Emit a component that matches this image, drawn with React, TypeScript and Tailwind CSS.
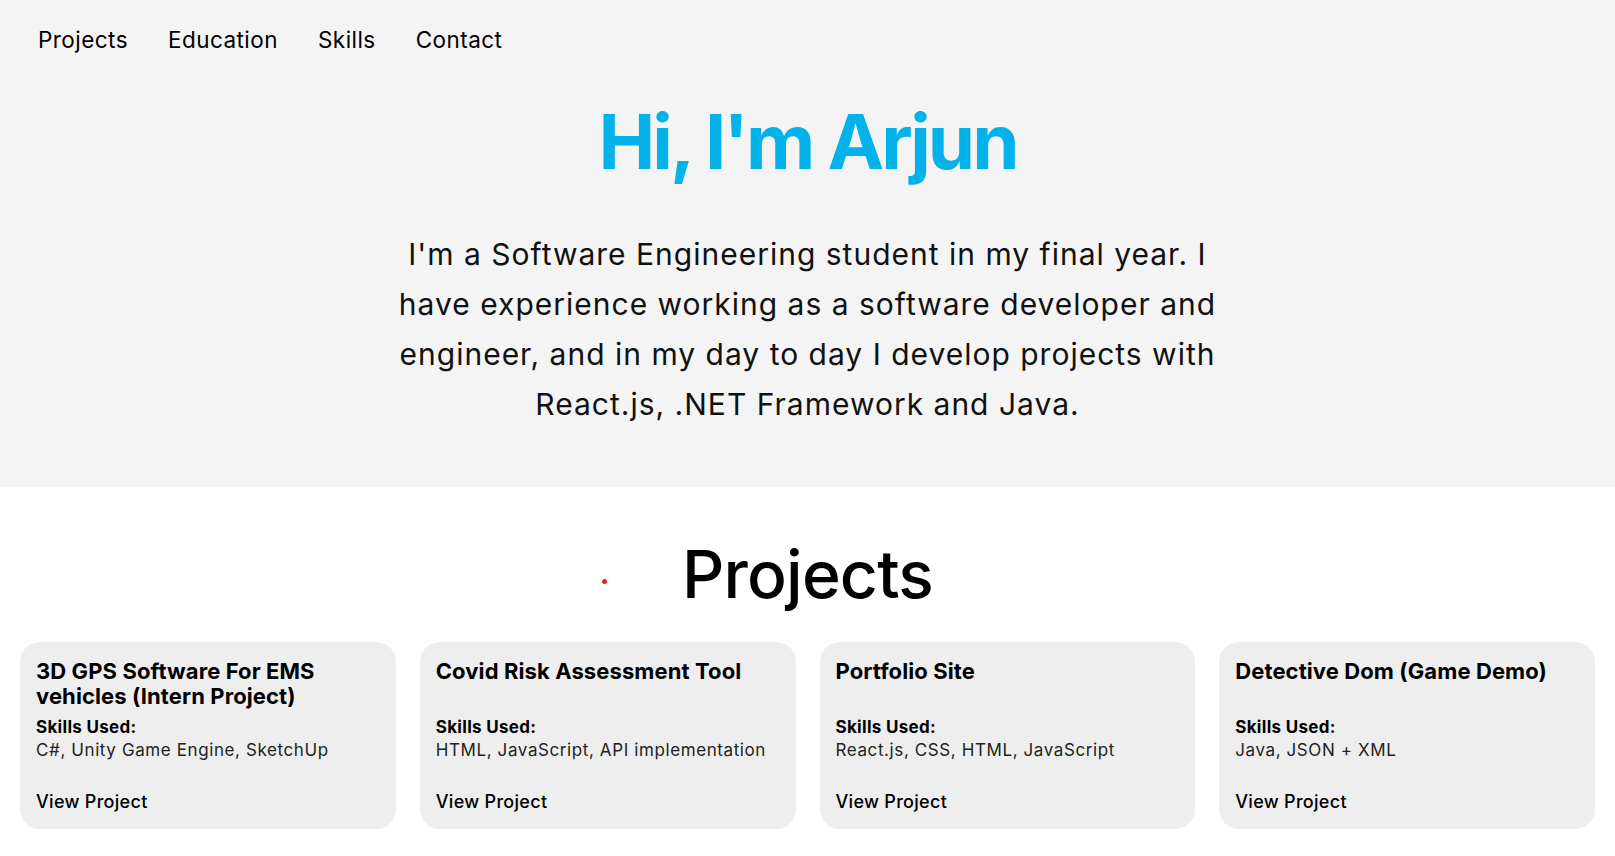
import React from 'react';

type Project = {
  title: string;
  skills: string;
};

const projects: Project[] = [
  { title: '3D GPS Software For EMS vehicles (Intern Project)', skills: 'C#, Unity Game Engine, SketchUp' },
  { title: 'Covid Risk Assessment Tool', skills: 'HTML, JavaScript, API implementation' },
  { title: 'Portfolio Site', skills: 'React.js, CSS, HTML, JavaScript' },
  { title: 'Detective Dom (Game Demo)', skills: 'Java, JSON + XML' },
];

function Nav() {
  return (
    <nav className="flex items-center gap-10 px-[38px] pt-[23px] text-[22.5px] tracking-[0.45px] text-black">
      <a href="#projects">Projects</a>
      <a href="#education">Education</a>
      <a href="#skills">Skills</a>
      <a href="#contact">Contact</a>
    </nav>
  );
}

function ProjectCard({ title, skills }: Project) {
  return (
    <div className="flex flex-col rounded-[20px] bg-[#eeeeee] px-4 pt-[17px] pb-[16px] text-black">
      <h3 className="min-h-[50px] text-[22px] font-bold leading-[25px] tracking-[0.1px]">{title}</h3>
      <p className="mt-[7px] text-[17px] font-bold leading-[22px] tracking-[0.3px]">Skills Used:</p>
      <p className="mt-[1px] text-[17px] leading-[23px] tracking-[0.6px] text-[#222]">{skills}</p>
      <a href="#" className="mt-[29px] text-[18px] font-medium leading-[22px] tracking-[0.3px]">
        View Project
      </a>
    </div>
  );
}

export default function App() {
  return (
    <div className="min-h-screen bg-white font-['Inter',sans-serif]">
      <header className="h-[487px] bg-[#f4f4f4]">
        <Nav />
        <div className="flex flex-col items-center">
          <h1 className="mt-[39px] text-[76px] font-bold leading-[90px] tracking-[-3px] text-[#03b2e8]">
            Hi, I'm Arjun
          </h1>
          <p className="mt-[43px] max-w-[840px] text-center text-[30px] leading-[50px] tracking-[1px] text-[#111]">
            I'm a Software Engineering student in my final year. I have experience working as a software developer and
            engineer, and in my day to day I develop projects with React.js, .NET Framework and Java.
          </p>
        </div>
      </header>

      <section id="projects" className="px-5">
        <div className="relative flex justify-center pt-[52px]">
          <span className="absolute left-[582px] top-[92px] h-[5px] w-[5px] rounded-full bg-[#e8242a]" />
          <h2 className="text-[66px] font-medium leading-[70px] tracking-[-0.8px] text-black">Projects</h2>
        </div>
        <div className="mt-[33px] grid grid-cols-4 gap-6">
          {projects.map((p) => (
            <ProjectCard key={p.title} {...p} />
          ))}
        </div>
      </section>
    </div>
  );
}
